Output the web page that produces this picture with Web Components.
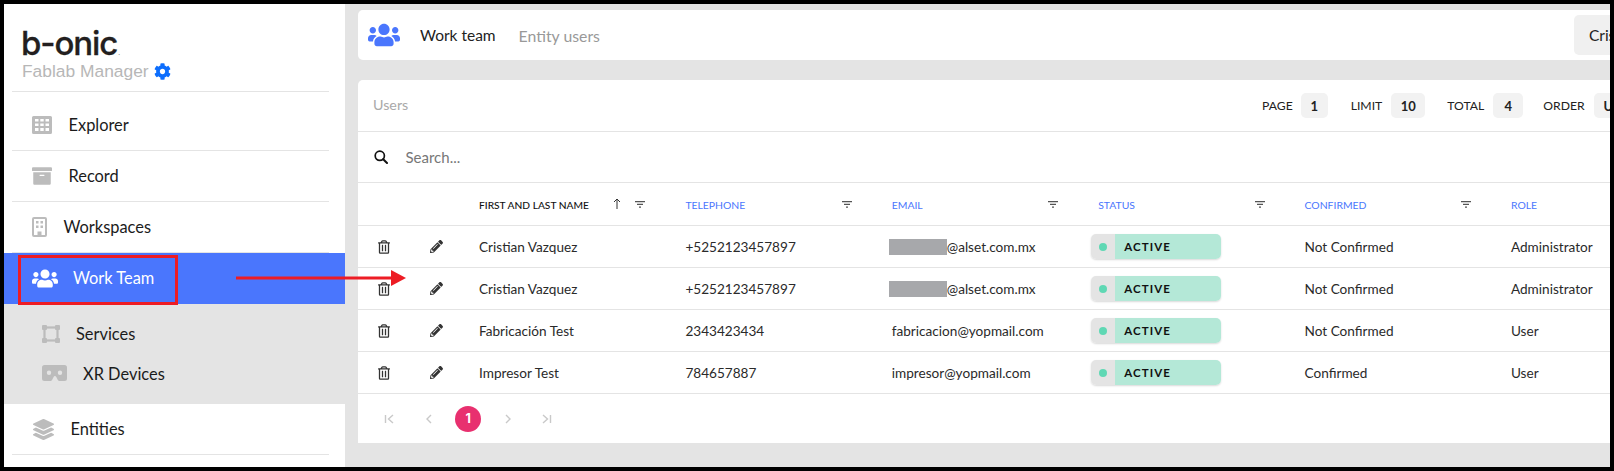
<!DOCTYPE html>
<html lang="en">
<head>
<meta charset="utf-8">
<title>Work team</title>
<style>
  html, body { margin: 0; background: #000; }
  body { font-family: Lato, "Liberation Sans", sans-serif; color: #222; }
</style>
</head>
<body>
<app-frame>
  <side-bar>
    <nav-item icon="grid" pad="28" w="20" h="18" gap="16.5" label="Explorer" first></nav-item>
    <nav-item icon="archive" pad="28" w="20" h="20" gap="16.5" label="Record"></nav-item>
    <nav-item icon="building" pad="28" w="15" h="20" gap="16.5" label="Workspaces"></nav-item>
    <nav-item icon="users" pad="28" w="26" h="21" gap="15" label="Work Team" active></nav-item>
    <nav-group>
      <nav-item icon="vector" pad="38" w="18" h="18" gap="16" label="Services" sub></nav-item>
      <nav-item icon="cardboard" pad="38" w="25" h="16" gap="16" label="XR Devices" sub></nav-item>
    </nav-group>
    <nav-item icon="layers" pad="29" w="21" h="21" gap="16.5" label="Entities"></nav-item>
  </side-bar>
  <main-area>
    <top-bar></top-bar>
    <users-card>
      <user-row name="Cristian Vazquez" phone="+5252123457897" email="@alset.com.mx" confirmed="Not Confirmed" role="Administrator" redact></user-row>
      <user-row name="Cristian Vazquez" phone="+5252123457897" email="@alset.com.mx" confirmed="Not Confirmed" role="Administrator" redact></user-row>
      <user-row name="Fabricación Test" phone="2343423434" email="fabricacion@yopmail.com" confirmed="Not Confirmed" role="User"></user-row>
      <user-row name="Impresor Test" phone="784657887" email="impresor@yopmail.com" confirmed="Confirmed" role="User"></user-row>
    </users-card>
  </main-area>
  <call-out></call-out>
</app-frame>

<script>
// icon shapes, mostly solid glyphs on their own viewBox
const ICONS = {
  users: ['0 0 640 512', '<path d="M96 224c35.3 0 64-28.7 64-64s-28.7-64-64-64-64 28.7-64 64 28.7 64 64 64zm448 0c35.3 0 64-28.7 64-64s-28.7-64-64-64-64 28.7-64 64 28.7 64 64 64zm32 32h-64c-17.6 0-33.5 7.1-45.1 18.6 40.3 22.1 68.9 62 75.1 109.4h66c17.7 0 32-14.3 32-32v-32c0-35.3-28.7-64-64-64zm-256 0c61.9 0 112-50.1 112-112S381.9 32 320 32 208 82.1 208 144s50.1 112 112 112zm76.8 32h-8.3c-20.8 10-43.9 16-68.5 16s-47.6-6-68.5-16h-8.3C179.6 288 128 339.6 128 403.2V432c0 26.5 21.5 48 48 48h288c26.5 0 48-21.5 48-48v-28.8c0-63.6-51.6-115.2-115.2-115.2zm-223.7-13.4C161.5 263.1 145.6 256 128 256H64c-35.3 0-64 28.7-64 64v32c0 17.7 14.3 32 32 32h65.9c6.3-47.4 34.9-87.3 75.2-109.4z"/>'],
  cog: ['0 0 512 512', '<path d="M487.4 315.7l-42.6-24.6c4.3-23.2 4.3-47 0-70.2l42.6-24.6c4.9-2.8 7.1-8.6 5.5-14-11.1-35.6-30-67.8-54.7-94.6-3.8-4.1-10-5.1-14.8-2.3L380.8 110c-17.9-15.4-38.5-27.3-60.8-35.1V25.8c0-5.6-3.9-10.5-9.4-11.7-36.7-8.2-74.3-7.8-109.2 0-5.5 1.2-9.4 6.1-9.4 11.7V75c-22.2 7.9-42.8 19.8-60.8 35.1L88.7 85.5c-4.9-2.8-11-1.9-14.8 2.3-24.7 26.7-43.6 58.9-54.7 94.6-1.7 5.4.6 11.2 5.5 14L67.3 221c-4.3 23.2-4.3 47 0 70.2l-42.6 24.6c-4.9 2.8-7.1 8.6-5.5 14 11.1 35.6 30 67.8 54.7 94.6 3.8 4.1 10 5.1 14.8 2.3l42.6-24.6c17.9 15.4 38.5 27.3 60.8 35.1v49.2c0 5.6 3.9 10.5 9.4 11.7 36.7 8.2 74.3 7.8 109.2 0 5.5-1.2 9.4-6.1 9.4-11.7v-49.2c22.2-7.9 42.8-19.8 60.8-35.1l42.6 24.6c4.9 2.8 11 1.9 14.8-2.3 24.7-26.7 43.6-58.9 54.7-94.6 1.5-5.5-.7-11.3-5.6-14.1zM256 336c-44.1 0-80-35.9-80-80s35.9-80 80-80 80 35.9 80 80-35.9 80-80 80z"/>'],
  trash: ['0 0 448 512', '<path d="M268 416h24a12 12 0 0 0 12-12V188a12 12 0 0 0-12-12h-24a12 12 0 0 0-12 12v216a12 12 0 0 0 12 12zM432 80h-82.41l-34-56.7A48 48 0 0 0 274.41 0H173.59a48 48 0 0 0-41.16 23.3L98.41 80H16A16 16 0 0 0 0 96v16a16 16 0 0 0 16 16h16v336a48 48 0 0 0 48 48h288a48 48 0 0 0 48-48V128h16a16 16 0 0 0 16-16V96a16 16 0 0 0-16-16zM171.84 50.91A6 6 0 0 1 177 48h94a6 6 0 0 1 5.15 2.91L293.61 80H154.39zM368 464H80V128h288zm-212-48h24a12 12 0 0 0 12-12V188a12 12 0 0 0-12-12h-24a12 12 0 0 0-12 12v216a12 12 0 0 0 12 12z"/>'],
  pencil: ['0 0 512 512', '<path d="M497.9 142.1l-46.1 46.1c-4.7 4.7-12.3 4.7-17 0l-111-111c-4.7-4.7-4.7-12.3 0-17l46.1-46.1c18.7-18.7 49.1-18.7 67.9 0l60.1 60.1c18.8 18.7 18.8 49.1 0 67.9zM284.2 99.8L21.6 362.4.4 483.9c-2.9 16.4 11.4 30.6 27.8 27.8l121.5-21.3 262.6-262.6c4.7-4.7 4.7-12.3 0-17l-111-111c-4.8-4.7-12.4-4.7-17.1 0zM124.1 339.9c-5.5-5.5-5.5-14.3 0-19.8l154-154c5.5-5.5 14.3-5.5 19.8 0s5.5 14.3 0 19.8l-154 154c-5.5 5.5-14.3 5.5-19.8 0zM88 424h48v36.3l-64.5 11.3-31.1-31.1L51.7 376H88v48z"/>'],
  search: ['0 0 14 14', '<circle cx="5.8" cy="5.8" r="4.6" fill="none" stroke="currentColor" stroke-width="1.7"/><path d="M9.2 9.2l3.8 3.8" fill="none" stroke="currentColor" stroke-width="2" stroke-linecap="round"/>'],
  archive: ['0 0 512 512', '<path d="M32 448c0 17.7 14.3 32 32 32h384c17.7 0 32-14.3 32-32V160H32v288zm160-212c0-6.6 5.4-12 12-12h104c6.6 0 12 5.4 12 12v8c0 6.6-5.4 12-12 12H204c-6.6 0-12-5.4-12-12v-8zM480 32H32C14.3 32 0 46.3 0 64v48c0 8.8 7.2 16 16 16h480c8.8 0 16-7.2 16-16V64c0-17.7-14.3-32-32-32z"/>'],
  layers: ['0 0 512 512', '<path d="M12.41 148.02l232.94 105.67c6.8 3.09 14.49 3.09 21.29 0l232.94-105.67c16.55-7.51 16.55-32.52 0-40.03L266.65 2.31a25.607 25.607 0 0 0-21.29 0L12.41 107.98c-16.55 7.51-16.55 32.53 0 40.04zm487.18 88.28l-58.09-26.33-161.64 73.27c-7.56 3.43-15.59 5.17-23.86 5.17s-16.29-1.74-23.86-5.17L70.51 209.97l-58.1 26.33c-16.55 7.5-16.55 32.5 0 40l232.94 105.59c6.8 3.08 14.49 3.08 21.29 0L499.59 276.3c16.55-7.5 16.55-32.5 0-40zm0 127.8l-57.87-26.23-161.86 73.37c-7.56 3.43-15.59 5.17-23.86 5.17s-16.29-1.74-23.86-5.17L70.29 337.87 12.41 364.1c-16.55 7.5-16.55 32.5 0 40l232.94 105.59c6.8 3.08 14.49 3.08 21.29 0L499.59 404.1c16.55-7.5 16.55-32.5 0-40z"/>'],
  grid: ['0 0 20 18', '<path fill-rule="evenodd" d="M1.5 0h17A1.5 1.5 0 0 1 20 1.5v15a1.5 1.5 0 0 1-1.5 1.5h-17A1.5 1.5 0 0 1 0 16.5v-15A1.5 1.5 0 0 1 1.5 0zM3 3v2.5h3.5V3zm5.3 0v2.5h3.4V3zm5.2 0v2.5H17V3zM3 7.500V10h3.500V7.500zm5.300 0V10h3.400V7.500zm5.200 0V10H17V7.500zM3 12v3h3.500v-3zm5.300 0v3h3.400v-3zm5.200 0v3H17v-3z"/>'],
  building: ['0 0 15 20', '<path fill-rule="evenodd" d="M2 0h11a2 2 0 0 1 2 2v16a2 2 0 0 1-2 2H2a2 2 0 0 1-2-2V2a2 2 0 0 1 2-2zm0 2v16h3.500v-3.500h4V18H13V2zm2 2h2.500v2.500H4zm4.500 0H11v2.500H8.500zM4 8.500h2.500V11H4zm4.500 0H11V11H8.500z"/>'],
  vector: ['0 0 18 18', '<rect x="2.5" y="2.5" width="13" height="13" fill="none" stroke="currentColor" stroke-width="2.2"/><rect width="5" height="5" rx="1"/><rect x="13" width="5" height="5" rx="1"/><rect y="13" width="5" height="5" rx="1"/><rect x="13" y="13" width="5" height="5" rx="1"/>'],
  cardboard: ['0 0 25 16', '<path fill-rule="evenodd" d="M2.500 0h20A2.500 2.500 0 0 1 25 2.500v11a2.500 2.500 0 0 1-2.500 2.500h-4.700c-.9 0-1.700-.5-2.100-1.300l-1.400-2.700c-.7-1.300-2.100-1.300-2.700 0l-1.400 2.700c-.4.800-1.200 1.300-2.100 1.300H2.500A2.500 2.500 0 0 1 0 13.500v-11A2.500 2.500 0 0 1 2.500 0zM7 5.500a2.200 2.200 0 1 0 0 4.400 2.200 2.200 0 0 0 0-4.400zm11 0a2.200 2.200 0 1 0 0 4.400 2.200 2.200 0 0 0 0-4.400z"/>']
};

class UiIcon extends HTMLElement {
  constructor() {
    super();
    const shadow = this.attachShadow({ mode: 'open' });
    const [box, body] = ICONS[this.getAttribute('name')];
    const w = this.getAttribute('w') || 16;
    const h = this.getAttribute('h') || w;
    shadow.innerHTML = `
      <style>
        :host { display: inline-flex; flex: none; width: ${w}px; height: ${h}px; }
        svg { width: 100%; height: 100%; fill: currentColor; display: block; }
      </style>
      <svg viewBox="${box}">${body}</svg>`;
  }
}
customElements.define('ui-icon', UiIcon);

class AppFrame extends HTMLElement {
  constructor() {
    super();
    this.attachShadow({ mode: 'open' }).innerHTML = `
      <style>
        :host { display: flex; position: relative; box-sizing: border-box; width: 1614px; height: 471px; border: 4px solid #000; overflow: hidden; background: #e4e4e4; }
      </style>
      <slot></slot>`;
  }
}
customElements.define('app-frame', AppFrame);

class SideBar extends HTMLElement {
  constructor() {
    super();
    this.attachShadow({ mode: 'open' }).innerHTML = `
      <style>
        :host { display: flex; flex-direction: column; flex: none; width: 341px; background: #fff; }
        .brand { box-sizing: border-box; height: 88px; margin: 0 16px 0 8px; padding: 22px 0 0 10px; border-bottom: 1px solid #e4e4e4; }
        .logo { font: 500 33px/34px Inter, "Liberation Sans", sans-serif; letter-spacing: -1.1px; color: #231f20; display: flex; margin-left: -1px; -webkit-text-stroke: .3px #231f20; }
        .logo span { font-size: 6px; line-height: 6px; margin: 24px 0 0 1px; letter-spacing: 0; -webkit-text-stroke: 0; }
        .app { display: flex; align-items: center; gap: 5px; margin-top: 1px; font: 17.4px/20px "Liberation Sans", sans-serif; color: #b7b7b7; }
        ui-icon { color: #0d6efd; }
      </style>
      <div class="brand">
        <div class="logo">b-onic<span>.</span></div>
        <div class="app">Fablab Manager <ui-icon name="cog" w="17"></ui-icon></div>
      </div>
      <slot></slot>`;
  }
}
customElements.define('side-bar', SideBar);

class NavItem extends HTMLElement {
  constructor() {
    super();
    const a = (k) => this.getAttribute(k);
    this.attachShadow({ mode: 'open' }).innerHTML = `
      <style>
        :host { display: block; height: 51px; }
        :host([first]) { height: 59px; }
        :host([sub]) { height: 39.5px; }
        .row { box-sizing: border-box; height: 100%; margin: 0 16px 0 8px; padding-left: ${a('pad') - 8}px; display: flex; align-items: center; gap: ${a('gap')}px; font-size: 16.4px; color: #1b1b1b; border-bottom: 1px solid #e4e4e4; }
        .row span { margin-top: -2px; }
        :host([first]) .row { padding-top: 8px; }
        ui-icon { color: #bcbcbc; }
        :host([active]) .row { margin: 0; padding-left: ${a('pad')}px; background: #4a76fd; color: #fff; border: 0; }
        :host([active]) ui-icon { color: #fff; }
        :host([sub]) .row { margin: 0; padding-left: ${a('pad')}px; border: 0; }
        :host([sub]) .row span { margin-top: 0; }
      </style>
      <div class="row"><ui-icon name="${a('icon')}" w="${a('w')}" h="${a('h')}"></ui-icon><span>${a('label')}</span></div>`;
  }
}
customElements.define('nav-item', NavItem);

class NavGroup extends HTMLElement {
  constructor() {
    super();
    this.attachShadow({ mode: 'open' }).innerHTML = `
      <style>:host { display: block; background: #e4e4e4; padding: 10px 0 11px; }</style>
      <slot></slot>`;
  }
}
customElements.define('nav-group', NavGroup);

class MainArea extends HTMLElement {
  constructor() {
    super();
    this.attachShadow({ mode: 'open' }).innerHTML = `
      <style>:host { display: flex; flex-direction: column; gap: 20px; flex: none; width: 1400px; padding: 6px 0 0 13px; }</style>
      <slot></slot>`;
  }
}
customElements.define('main-area', MainArea);

class TopBar extends HTMLElement {
  constructor() {
    super();
    this.attachShadow({ mode: 'open' }).innerHTML = `
      <style>
        :host { display: flex; align-items: center; box-sizing: border-box; height: 50px; padding: 0 0 0 10px; background: #fff; border-radius: 5px; font-size: 15.5px; }
        ui-icon { color: #4a76fd; margin-right: 20px; }
        .sub { color: #999; margin-left: 23px; font-size: 15.8px; }
        .who { margin-left: 974px; height: 40px; padding: 0 15px; display: flex; align-items: center; background: #f0f0f0; border-radius: 5px; white-space: nowrap; }
      </style>
      <ui-icon name="users" w="32" h="26"></ui-icon>
      <span>Work team</span>
      <span class="sub">Entity users</span>
      <span class="who">Cristian Vazquez</span>`;
  }
}
customElements.define('top-bar', TopBar);

const COLS = '52px 52px repeat(6, 206.4px)';

class UsersCard extends HTMLElement {
  constructor() {
    super();
    const head = ['TELEPHONE', 'EMAIL', 'STATUS', 'CONFIRMED', 'ROLE'];
    const filter = `<svg class="filter" viewBox="0 0 10 7"><path d="M0 0h10v1.3H0zM2 2.7h6V4H2zM4 5.4h2v1.3H4z"/></svg>`;
    const pages = (d) => `<svg viewBox="0 0 12 12"><path d="${d}"/></svg>`;
    const chip = (label, value, w, before, after) => `<span>${label}</span><span class="chip" style="min-width:${w}px;margin-left:${before}px;margin-right:${after}px">${value}</span>`;
    this.attachShadow({ mode: 'open' }).innerHTML = `
      <style>
        :host { display: block; background: #fff; border-radius: 5px 5px 0 0; height: 363px; }
        .bar { box-sizing: border-box; display: flex; align-items: center; border-bottom: 1px solid #e4e4e4; }
        .title { height: 52px; }
        .users { flex: 0 0 889px; padding-left: 15px; padding-bottom: 2px; color: #a9a9a9; font-size: 14.3px; }
        .meta { display: flex; align-items: center; font-size: 12.2px; color: #222; white-space: nowrap; }
        .chip { height: 25px; box-sizing: border-box; display: flex; align-items: center; justify-content: center; background: #f2f2f2; border-radius: 5px; font-weight: 700; font-size: 13px; }
        .find { height: 51px; padding-left: 16px; gap: 17.5px; color: #777; font-size: 15px; }
        .find ui-icon { color: #111; }
        .head { display: grid; grid-template-columns: ${COLS}; height: 43px; box-sizing: border-box; border-bottom: 1px solid #e4e4e4; font-size: 10.4px; color: #4a76fd; }
        .h { display: flex; align-items: center; padding: 0 23px 0 17px; }
        .h span { flex: 1; padding-top: 2px; }
        .h.first { color: #111; font-weight: 500; font-size: 10.2px; }
        .filter { width: 10px; height: 7px; fill: #555; }
        .up { width: 8px; height: 11px; margin: -2px 14px 0 0; fill: none; stroke: #333; stroke-width: 1; }
        .pager { display: flex; align-items: center; height: 49px; padding-left: 11.5px; }
        .pager > div { width: 39.5px; display: flex; justify-content: center; }
        .pager svg { width: 12px; height: 12px; fill: none; stroke: #c9c9c9; stroke-width: 1.4; }
        .pager b { width: 26px; height: 26px; border-radius: 50%; background: #e8306f; color: #fff; display: flex; align-items: center; justify-content: center; font: 700 12.5px Inter, sans-serif; }
      </style>
      <div class="bar title">
        <span class="users">Users</span>
        <div class="meta">${chip('PAGE', '1', 27, 8, 23)}${chip('LIMIT', '10', 34, 9, 22)}${chip('TOTAL', '4', 30, 9, 20)}${chip('ORDER', 'UPDATED', 80, 9, 0)}</div>
      </div>
      <div class="bar find"><ui-icon name="search" w="14"></ui-icon><span>Search...</span></div>
      <div class="head">
        <div></div><div></div>
        <div class="h first"><span>FIRST AND LAST NAME</span><svg class="up" viewBox="0 0 8 11"><path d="M4 11V1M1 4l3-3 3 3"/></svg>${filter}</div>
        ${head.map((t) => `<div class="h"><span>${t}</span>${filter}</div>`).join('')}
      </div>
      <slot></slot>
      <div class="pager">
        <div>${pages('M2.5 2v8M10 2L5.5 6l4.5 4')}</div>
        <div>${pages('M8 2L4 6l4 4')}</div>
        <div><b>1</b></div>
        <div>${pages('M4 2l4 4-4 4')}</div>
        <div>${pages('M2 2l4.5 4L2 10M9.5 2v8')}</div>
      </div>`;
  }
}
customElements.define('users-card', UsersCard);

class StatusPill extends HTMLElement {
  constructor() {
    super();
    this.attachShadow({ mode: 'open' }).innerHTML = `
      <style>
        :host { display: flex; width: 130px; height: 25px; border-radius: 5px; overflow: hidden; box-shadow: 0 1px 2px rgba(0,0,0,.15); }
        .dot { width: 24px; display: flex; align-items: center; justify-content: center; background: #e4e4e4; }
        .dot i { width: 8px; height: 8px; border-radius: 50%; background: #5fd8b4; }
        .txt { flex: 1; padding-left: 9px; display: flex; align-items: center; background: #b4e8d7; color: #111; font-size: 11.5px; font-weight: 700; letter-spacing: 1.1px; }
      </style>
      <div class="dot"><i></i></div><div class="txt"><slot></slot></div>`;
  }
}
customElements.define('status-pill', StatusPill);

class UserRow extends HTMLElement {
  constructor() {
    super();
    const a = (k) => this.getAttribute(k);
    const mask = this.hasAttribute('redact') ? '<i class="mask"></i>' : '';
    this.attachShadow({ mode: 'open' }).innerHTML = `
      <style>
        :host { display: grid; grid-template-columns: ${COLS}; align-items: center; box-sizing: border-box; height: 42px; border-bottom: 1px solid #e4e4e4; font-size: 13.6px; color: #2a2a2a; white-space: nowrap; }
        .c { padding-left: 17px; display: flex; align-items: center; }
        .ic { display: flex; justify-content: center; color: #333; }
        .st { padding-left: 10px; }
        .mask { width: 58px; height: 16px; margin-left: -3px; background: #a7a8ab; }
      </style>
      <div class="ic"><ui-icon name="trash" w="12" h="14"></ui-icon></div>
      <div class="ic"><ui-icon name="pencil" w="13"></ui-icon></div>
      <div class="c">${a('name')}</div>
      <div class="c">${a('phone')}</div>
      <div class="c">${mask}${a('email')}</div>
      <div class="st"><status-pill>ACTIVE</status-pill></div>
      <div class="c">${a('confirmed')}</div>
      <div class="c">${a('role')}</div>`;
  }
}
customElements.define('user-row', UserRow);

// red annotation drawn over the page
class CallOut extends HTMLElement {
  constructor() {
    super();
    this.attachShadow({ mode: 'open' }).innerHTML = `
      <style>
        :host { position: absolute; inset: 0; pointer-events: none; }
        .box { position: absolute; left: 14px; top: 251px; width: 160px; height: 50px; box-sizing: border-box; border: 3px solid #ed1c24; }
        svg { position: absolute; left: 232px; top: 266px; width: 170px; height: 16px; fill: #ed1c24; }
      </style>
      <div class="box"></div>
      <svg viewBox="0 0 170 16"><path d="M0 6.5h155V0l15 8-15 8V9.5H0z"/></svg>`;
  }
}
customElements.define('call-out', CallOut);
</script>
</body>
</html>
